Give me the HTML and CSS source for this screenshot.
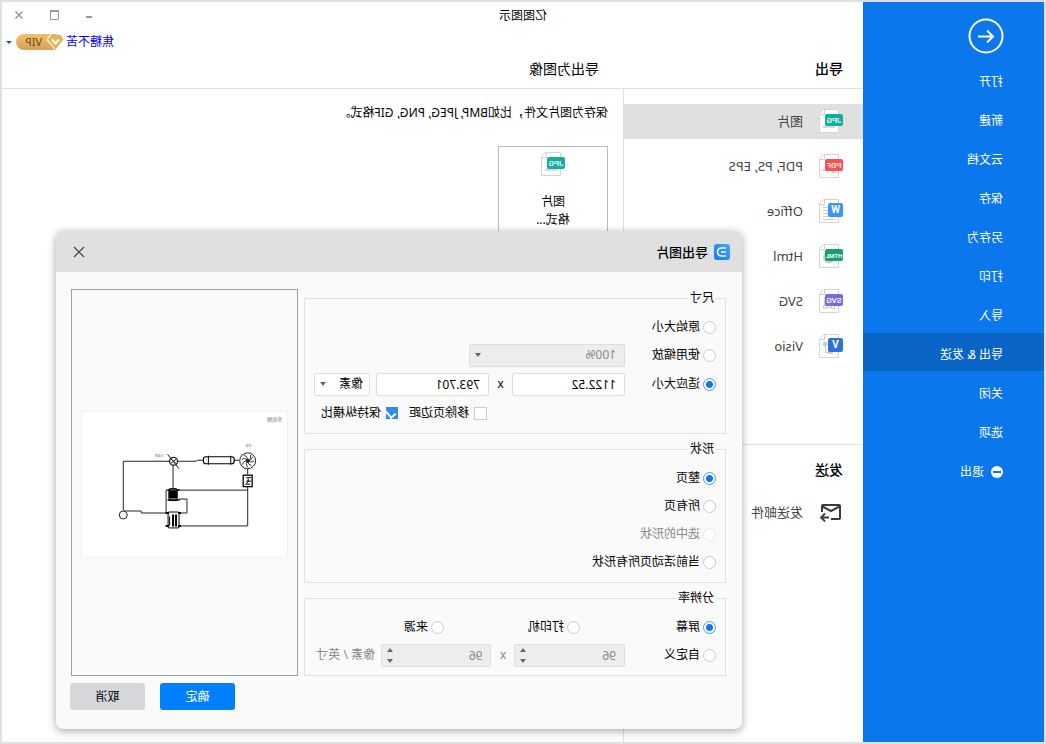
FILE: index.html
```html
<!DOCTYPE html>
<html lang="zh-CN">
<head>
<meta charset="utf-8">
<title>亿图图示</title>
<link rel="stylesheet" href="styles.css">
</head>
<body>
<div class="window">
  <aside class="sidebar">
    <button class="back" aria-label="返回">
      <svg width="36" height="36" viewBox="0 0 36 36" fill="none" stroke="#fff" stroke-width="2"><circle cx="18" cy="18" r="16.5"/><path d="M26 18.500H11M17 12.500L11 18.500l6 6"/></svg>
    </button>
    <nav class="menu">
      <a class="menu-item" href="#">打开</a>
      <a class="menu-item" href="#">新建</a>
      <a class="menu-item" href="#">云文档</a>
      <a class="menu-item" href="#">保存</a>
      <a class="menu-item" href="#">另存为</a>
      <a class="menu-item" href="#">打印</a>
      <a class="menu-item" href="#">导入</a>
      <a class="menu-item is-active" href="#">导出 &amp; 发送</a>
      <a class="menu-item" href="#">关闭</a>
      <a class="menu-item" href="#">选项</a>
      <a class="menu-item" href="#"><svg width="12" height="12" viewBox="0 0 12 12"><circle cx="6" cy="6" r="6" fill="#fff"/><path d="M2 6h8" stroke="#0a77ec" stroke-width="2"/></svg>退出</a>
    </nav>
  </aside>

  <main class="main">
    <header class="header">
      <div class="titlebar">
        <span class="app-title">亿图图示</span>
        <div class="controls">
          <button class="control" aria-label="最小化"><svg width="10" height="10" viewBox="0 0 10 10"><path d="M2 7h6" stroke="#999" stroke-width="2"/></svg></button>
          <button class="control" aria-label="最大化"><svg width="10" height="10" viewBox="0 0 10 10" fill="none" stroke="#999"><path d="M.5 1v8.500h8V1"/><path d="M0 1h9" stroke-width="2"/></svg></button>
          <button class="control" aria-label="关闭"><svg width="10" height="10" viewBox="0 0 10 10"><path d="M1.500 1.500l7 7M8.500 1.500l-7 7" stroke="#999" stroke-width="1.500"/></svg></button>
        </div>
      </div>
      <div class="account">
        <a class="user" href="#">焦糖不苦</a>
        <span class="vip">
          <svg width="17" height="16" viewBox="0 0 17 16"><path d="M4 .5h9l3.500 5-8 10L.5 5.500z" fill="#e3b35f"/><path d="M13 .5l4 5-8 10" fill="none" stroke="#fff" stroke-width="1.200"/><path d="M5 5.500l3.500 4 3.500-4" fill="none" stroke="#fff" stroke-width="2"/></svg>
          <span class="vip-text">VIP</span>
        </span>
        <i class="caret"></i>
      </div>
      <div class="headings">
        <h2 class="heading heading-strong">导出</h2>
        <h2 class="heading">导出为图像</h2>
      </div>
    </header>

    <div class="content">
      <div class="column">
        <nav class="formats">
          <a class="format is-active" href="#">
            <svg class="file" width="24" height="24" viewBox="0 0 24 24"><path d="M4.500.5h15l4 4v19h-19z" fill="#fff" stroke="#d4d4d4"/><path d="M18.500.5v5h5" fill="none" stroke="#d4d4d4"/><path d="M7 19l5-6 3 3 2-2 4 5z" fill="#d9d9d9"/><rect y="5" width="18" height="12" rx="2" fill="#14ada1"/><text x="9" y="14">JPG</text></svg>图片</a>
          <a class="format" href="#">
            <svg class="file" width="24" height="24" viewBox="0 0 24 24"><path d="M4.500.5h15l4 4v19h-19z" fill="#fff" stroke="#d4d4d4"/><path d="M18.500.5v5h5" fill="none" stroke="#d4d4d4"/><path d="M8 19l6-4 6 1M14 14l-5 5" fill="none" stroke="#ccc" stroke-width="2"/><rect y="5" width="18" height="12" rx="2" fill="#ff4d52"/><text x="9" y="14">PDF</text></svg>PDF, PS, EPS</a>
          <a class="format" href="#">
            <svg class="file" width="24" height="24" viewBox="0 0 24 24"><path d="M4.500.5h15l4 4v19h-19z" fill="#fff" stroke="#d4d4d4"/><path d="M18.500.5v5h5M14 8.500h6M14 11.500h6M14 14.500h6M7 17.500h13M8 20.500h12" fill="none" stroke="#ccc"/><rect y="4" width="15" height="14" rx="2" fill="#3d95fc"/><text class="letter" x="7.500" y="14">W</text></svg>Office</a>
          <a class="format" href="#">
            <svg class="file" width="24" height="24" viewBox="0 0 24 24"><path d="M4.500.5h15l4 4v19h-19z" fill="#fff" stroke="#d4d4d4"/><path d="M18.500.5v5h5" fill="none" stroke="#d4d4d4"/><circle cx="14" cy="13.500" r="6" fill="#ccc"/><rect y="5" width="18" height="12" rx="2" fill="#14a06f"/><text class="narrow" x="9" y="14">HTML</text></svg>Html</a>
          <a class="format" href="#">
            <svg class="file" width="24" height="24" viewBox="0 0 24 24"><path d="M4.500.5h15l4 4v19h-19z" fill="#fff" stroke="#d4d4d4"/><path d="M18.500.5v5h5M8.500 16.500h3v3h-3zM16.500 16.500h3v3h-3zM11.500 18.500h5M18.500 16V8" fill="none" stroke="#ccc"/><rect y="5" width="18" height="12" rx="2" fill="#7d68e0"/><text x="9" y="14">SVG</text></svg>SVG</a>
          <a class="format" href="#">
            <svg class="file" width="24" height="24" viewBox="0 0 24 24"><path d="M4.500.5h15l4 4v19h-19z" fill="#fff" stroke="#d4d4d4"/><path d="M18.500.5v5h5M12 18.500h5.500V10" fill="none" stroke="#ccc"/><path d="M18 7l3 3-3 3-3-3zM10 17h5v3h-5z" fill="#ccc"/><rect y="4" width="15" height="14" rx="2" fill="#2b73d9"/><text class="letter" x="7.500" y="14">V</text></svg>Visio</a>
        </nav>
        <section class="send">
          <h2 class="heading heading-strong">发送</h2>
          <a class="format" href="#">
            <svg width="24" height="20" viewBox="0 0 24 20" fill="none" stroke="#3a3a3a" stroke-width="2"><path d="M12 17H4a1 1 0 0 1-1-1V4a1 1 0 0 1 1-1h16a1 1 0 0 1 1 1v6M3.500 4.500l8.500 4.500 8.500-4.500M14 15.500h7"/><path d="M18 11.500l4 4-4 4" stroke-width="1.800"/></svg>发送邮件</a>
        </section>
      </div>
      <section class="detail">
        <p class="description">保存为图片文件，比如BMP, JPEG, PNG, GIF格式。</p>
        <button class="card">
          <svg class="file" width="24" height="24" viewBox="0 0 24 24"><path d="M4.500.5h15l4 4v19h-19z" fill="#fff" stroke="#d4d4d4"/><path d="M18.500.5v5h5" fill="none" stroke="#d4d4d4"/><path d="M7 19l5-6 3 3 2-2 4 5z" fill="#d9d9d9"/><rect y="5" width="18" height="12" rx="2" fill="#14ada1"/><text x="9" y="14">JPG</text></svg>
          <span>图片<br>格式...</span>
        </button>
      </section>
    </div>
  </main>

  <div class="dialog" role="dialog" aria-labelledby="dialog-title">
    <header class="dialog-header">
      <svg width="16" height="16" viewBox="0 0 16 16"><defs><linearGradient id="logo" x1="0" y1="0" x2="1" y2="1"><stop offset="0" stop-color="#3fa9ff"/><stop offset="1" stop-color="#1478f8"/></linearGradient></defs><rect width="16" height="16" rx="3" fill="url(#logo)"/><path d="M4 4h4.500a4 4 0 0 1 0 8H4M4 8h5" fill="none" stroke="#fff" stroke-width="1.700"/></svg>
      <h1 class="dialog-title" id="dialog-title">导出图片</h1>
      <button class="dialog-close" aria-label="关闭"><svg width="12" height="12" viewBox="0 0 12 12"><path d="M1 1l10 10M11 1L1 11" stroke="#444" stroke-width="1.200"/></svg></button>
    </header>
    <form class="dialog-body">
      <div class="groups">
        <fieldset class="group">
          <legend>尺寸</legend>
          <div class="row"><label class="choice"><input type="radio" name="size">原始大小</label></div>
          <div class="row">
            <label class="choice label-col"><input type="radio" name="size">使用缩放</label>
            <span class="picker picker-zoom is-disabled"><select aria-label="缩放" disabled><option>100%</option></select></span>
          </div>
          <div class="row row-tall">
            <label class="choice label-col"><input type="radio" name="size" checked>适应大小</label>
            <input class="field" type="text" value="1122.52" aria-label="宽度">
            <span class="times">x</span>
            <input class="field" type="text" value="793.701" aria-label="高度">
            <span class="picker picker-unit"><select aria-label="单位"><option>像素</option></select></span>
          </div>
          <div class="row row-checks">
            <label class="choice"><input type="checkbox">移除页边距</label>
            <label class="choice"><input type="checkbox" checked>保持纵横比</label>
          </div>
        </fieldset>

        <fieldset class="group">
          <legend>形状</legend>
          <div class="row"><label class="choice"><input type="radio" name="shape" checked>整页</label></div>
          <div class="row"><label class="choice"><input type="radio" name="shape">所有页</label></div>
          <div class="row"><label class="choice is-disabled"><input type="radio" name="shape" disabled>选中的形状</label></div>
          <div class="row"><label class="choice"><input type="radio" name="shape">当前活动页所有形状</label></div>
        </fieldset>

        <fieldset class="group">
          <legend>分辨率</legend>
          <div class="row row-thirds">
            <label class="choice"><input type="radio" name="dpi" checked>屏幕</label>
            <label class="choice"><input type="radio" name="dpi">打印机</label>
            <label class="choice"><input type="radio" name="dpi">来源</label>
          </div>
          <div class="row">
            <label class="choice label-col"><input type="radio" name="dpi">自定义</label>
            <span class="spinner"><input class="field" type="number" value="96" aria-label="水平分辨率" disabled></span>
            <span class="times is-disabled">x</span>
            <span class="spinner"><input class="field" type="number" value="96" aria-label="垂直分辨率" disabled></span>
            <span class="unit is-disabled">像素 / 英寸</span>
          </div>
        </fieldset>
      </div>

      <div class="preview">
        <svg class="page" viewBox="0 0 208 147" fill="none" stroke="#222">
          <rect x=".5" y=".5" width="207" height="146" fill="#fff" stroke="#f2f2f2"/>
          <path d="M165.500 100V50.500H92.500L91 49.500H85M165.500 100.500H147.500V102.500H122.500V79.500H110M54 49.500H49M40.500 58V64M40.500 76V115.500H108M40.500 79.500H110M110 88.500H101.500V102.500H109M115.500 54V78"/>
          <circle cx="165.500" cy="104.500" r="4" fill="#fff"/>
          <circle cx="115" cy="50.500" r="4" fill="#fff" stroke-width="1.300"/><path d="M121 43.500L109.500 58M112 48l6 5M118 48l-6 5"/>
          <rect x="54" y="46" width="31" height="7" rx="2.500" fill="#fff" stroke="#000" stroke-width="1.200"/><path d="M57.500 45v9M80 45v9" stroke="#000"/>
          <circle cx="40.500" cy="50" r="8" fill="#fff"/><circle cx="40.500" cy="50" r="1.500" fill="#000"/>
          <path d="M40.500 50q-4-2-3-6M40.500 50q0-5 4-6M40.500 50q3-4 6-1M40.500 50q5 0 5 4M40.500 50q3 3 0 6.500M40.500 50q0 4-4 5M40.500 50q-3 3-6.500 0M40.500 50q-4 0-5-4" stroke-width=".9"/>
          <rect x="36" y="64.500" width="9" height="11.500" fill="#fff" stroke="#000" stroke-width="1.300"/><path d="M37 67h5M37 70.500h5M42 73.500h-4M40 68v3l3 3" stroke="#000"/>
          <rect x="111.500" y="78" width="8" height="12" rx="1" fill="#fff" stroke="#000"/><path d="M111.500 80.500h8v7h-8z" fill="#000" stroke="#000"/><path d="M109 79.500h12M109 89.500h12" stroke="#000" stroke-width="1.500"/>
          <rect x="109.500" y="101.500" width="11" height="16" rx="1" fill="#fff" stroke="#000"/><path d="M112.500 104v12M115.500 104v12" stroke="#000" stroke-width="2"/><path d="M119 106v9" stroke="#000"/><path d="M107.500 102.500h3M119.500 102.500h3.500M107.500 115.500h3M119.500 115.500h3.500" stroke="#000" stroke-width="2"/>
          <text x="6" y="10" font-size="5" fill="#777" stroke="none">系统图</text>
          <text x="37" y="36" font-size="3" fill="#777" stroke="none">风机</text>
          <text x="125" y="46" font-size="3" fill="#5a8a80" stroke="none">冷凝器</text>
        </svg>
      </div>

      <div class="actions">
        <button class="button button-primary" type="button">确定</button>
        <button class="button" type="button">取消</button>
      </div>
    </form>
  </div>
</div>
</body>
</html>
```

FILE: styles.css
```css
* {
  box-sizing: border-box;
}

body {
  margin: 0;
  font: 12px/18px "Noto Sans", "Noto Sans CJK SC", sans-serif;
  color: #000;
}

button,
input,
select {
  font: inherit;
  color: inherit;
  margin: 0;
}

button {
  padding: 0;
  border: 0;
  background: none;
}

a {
  color: inherit;
  text-decoration: none;
}

h1,
h2,
p {
  margin: 0;
}

/* The whole window is shown mirrored, left to right. */
.window {
  position: relative;
  display: grid;
  grid-template-columns: 181px 1fr;
  min-height: 100vh;
  border: 2px solid #e0e0e0;
  background: #fff;
  transform: scaleX(-1);
}

.sidebar {
  background: #0a77ec;
  color: #fff;
}

.back {
  display: block;
  margin: 16px 0 6px 40px;
}

.back svg {
  display: block;
}

.menu {
  display: grid;
  gap: 1px;
}

.menu-item {
  display: flex;
  align-items: center;
  gap: 7px;
  height: 38px;
  padding: 6px 0 0 41px;
}

.menu-item.is-active {
  background: #0865c5;
}

.main {
  display: flex;
  flex-direction: column;
}

.header {
  height: 87px;
  border-bottom: 1px solid #e0e0e0;
}

.titlebar {
  display: flex;
  align-items: center;
  justify-content: space-between;
  height: 26px;
  padding-top: 2px;
  padding-left: calc(50vw - 207px);
}

.controls {
  display: flex;
}

.control {
  width: 35px;
  height: 20px;
}

.account {
  display: flex;
  align-items: center;
  justify-content: flex-end;
  height: 26px;
  padding-top: 2px;
  padding-right: 4px;
}

.user {
  color: #00f;
}

.vip {
  display: flex;
  align-items: center;
  width: 48px;
  height: 16px;
  margin: 0 4px 0 2px;
  border-radius: 2px 8px 8px 2px;
  background: linear-gradient(90deg, #fff 8px, transparent 8px), linear-gradient(#f1c269, #d5a05a);
}

.vip-text {
  padding-left: 5px;
  font-size: 11px;
  line-height: 16px;
  color: #6b4717;
}

.caret {
  border: 3px solid transparent;
  border-top-color: #0a5cb0;
  border-bottom: 0;
}

.headings {
  display: grid;
  grid-template-columns: 240px 1fr;
}

.heading {
  padding-left: 24px;
  font-size: 14px;
  font-weight: 400;
  line-height: 30px;
}

.heading-strong {
  padding-left: 20px;
  font-weight: 500;
}

.content {
  flex: 1;
  display: grid;
  grid-template-columns: 240px 1fr;
}

.column {
  border-right: 1px solid #e0e0e0;
}

.formats {
  display: grid;
  gap: 10px;
  padding: 15px 0 80px;
  border-bottom: 1px solid #e0e0e0;
}

.format {
  display: flex;
  align-items: center;
  gap: 16px;
  height: 35px;
  padding: 0 0 2px 20px;
  font-size: 13px;
  color: #444;
}

.format.is-active {
  background: #e0e0e0;
}

.file text {
  font: 500 8px Roboto, sans-serif;
  fill: #fff;
  text-anchor: middle;
}

.file .letter {
  font-size: 10px;
  font-weight: 700;
}

.file .narrow {
  font-size: 6px;
  font-weight: 700;
}

.send {
  display: grid;
  gap: 10px;
  padding-top: 10px;
}

.detail {
  padding: 15px;
}

.card {
  display: flex;
  flex-direction: column;
  align-items: center;
  gap: 17px;
  width: 110px;
  height: 110px;
  margin-top: 24px;
  padding-top: 5px;
  border: 1px solid #bbb;
  background: #fff;
}

.dialog {
  position: absolute;
  top: 229px;
  left: 302px;
  right: 54px;
  overflow: hidden;
  border-radius: 7px;
  background: #fafafa;
  box-shadow: 0 2px 8px rgba(0, 0, 0, .35);
}

.dialog-header {
  display: flex;
  align-items: center;
  gap: 6px;
  height: 41px;
  padding: 0 17px 0 12px;
  background: #e0e0e0;
}

.dialog-title {
  font-size: 13px;
  font-weight: 500;
}

.dialog-close {
  display: flex;
  margin-left: auto;
}

.dialog-body {
  display: grid;
  grid-template-columns: 1fr 227px;
  gap: 7px 6px;
  padding: 17px 15px 19px 16px;
}

.groups {
  display: grid;
  gap: 6px;
}

.group {
  min-width: 0;
  margin: 0;
  padding: 6px 9px;
  border: 1px solid #e0e0e0;
}

.group legend {
  padding: 0 2px;
  line-height: 18px;
}

.row {
  display: flex;
  align-items: center;
  height: 28px;
}

.row-tall {
  height: 30px;
}

.row-checks {
  justify-content: flex-end;
  gap: 11px;
  padding-right: 7px;
}

.row-thirds {
  display: grid;
  grid-template-columns: 136px 136px 1fr;
}

.choice {
  display: flex;
  align-items: center;
  gap: 3px;
}

.row-checks .choice {
  gap: 5px;
}

.label-col {
  width: 91px;
}

.is-disabled {
  color: #888;
}

.choice input {
  appearance: none;
  width: 13px;
  height: 13px;
  border: 1px solid #ccc;
  background: #fff;
}

.choice input[type="radio"] {
  border-radius: 50%;
}

.choice input[type="radio"]:checked {
  border-color: #4a9bf2;
  background: radial-gradient(circle, #0a77ec 3px, #fff 4px);
}

.choice input[type="checkbox"]:checked {
  width: 12px;
  height: 12px;
  border-color: #2d8cf0;
  background: #2d8cf0;
}

.choice input[type="checkbox"]:checked::before {
  content: "";
  display: block;
  width: 5px;
  height: 8px;
  margin-left: 3px;
  border: solid #fff;
  border-width: 0 2px 2px 0;
  transform: rotate(40deg);
}

.choice input:disabled {
  border-color: #e8e8e8;
}

.field,
.picker select {
  width: 100%;
  min-width: 0;
  height: 23px;
  padding: 0 8px;
  border: 1px solid #dcdfe2;
  border-radius: 2px;
  background: #fff;
}

.row > .field {
  flex: 1;
}

.field:disabled,
.picker select:disabled {
  background: #ededed;
  color: #888;
  opacity: 1;
}

.picker {
  position: relative;
  display: flex;
}

.picker select {
  appearance: none;
  padding: 0 6px;
}

.picker-zoom {
  width: 156px;
}

.picker-zoom select {
  padding: 0 8px;
}

.picker-unit {
  width: 56px;
  margin-left: 6px;
}

.picker::after {
  content: "";
  position: absolute;
  top: 9px;
  right: 6px;
  border: 3px solid transparent;
  border-top: 4px solid #666;
  border-bottom: 0;
}

.times {
  width: 23px;
  text-align: center;
}

.spinner {
  position: relative;
  flex: 1;
  display: flex;
}

.spinner input {
  appearance: textfield;
}

.spinner::before,
.spinner::after {
  content: "";
  position: absolute;
  right: 6px;
  border: 3px solid transparent;
}

.spinner::before {
  top: 4px;
  border-bottom: 4px solid #666;
  border-top: 0;
}

.spinner::after {
  bottom: 4px;
  border-top: 4px solid #666;
  border-bottom: 0;
}

.unit {
  width: 61px;
  margin-left: 6px;
  white-space: nowrap;
}

.preview {
  display: flex;
  align-items: center;
  padding: 3px 9px 0;
  border: 1px solid #a0a0a0;
}

.page {
  width: 100%;
}

.actions {
  grid-column: 2;
  display: flex;
  justify-content: flex-end;
  gap: 15px;
  margin-right: -1px;
}

.button {
  width: 75px;
  height: 27px;
  border-radius: 3px;
  background: #d5d7db;
}

.button-primary {
  background: #0080ff;
  color: #fff;
}
```
